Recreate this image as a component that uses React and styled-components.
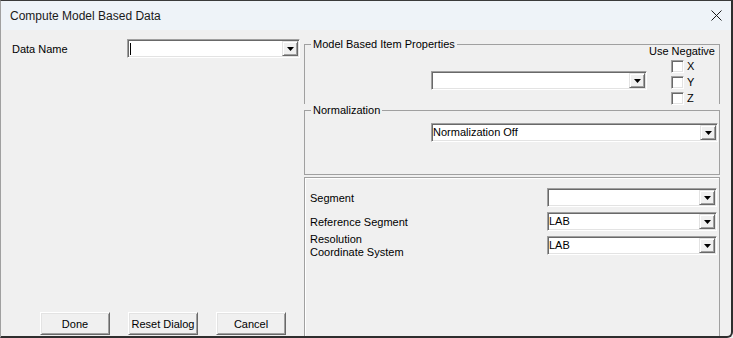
import React from 'react'
import styled, { createGlobalStyle } from 'styled-components'

const GlobalStyle = createGlobalStyle`
  html, body {
    margin: 0;
    padding: 0;
    background: #f0f0f0;
    overflow: hidden;
  }
  body {
    font-family: "Liberation Sans", Arial, sans-serif;
    font-size: 11px;
    color: #000;
  }
`

const Window = styled.div`
  width: 733px;
  height: 338px;
  box-sizing: border-box;
  display: flex;
  flex-direction: column;
  background: #f0f0f0;
  border-top: 1px solid #3a3a3a;
  border-left: 1px solid #a0a0a0;
  border-right: 2px solid #2e2e2e;
  border-bottom: 2px solid #2e2e2e;
  border-bottom-right-radius: 6px;
  overflow: hidden;
`

const TitleBar = styled.div`
  height: 29px;
  flex: none;
  display: flex;
  align-items: center;
  justify-content: space-between;
  padding: 0 9px;
  background: #eef3f8;
  font-size: 12px;
  color: #1a1a1a;
`

const CloseIcon = () => (
  <svg width="11" height="11" viewBox="0 0 11 11">
    <path d="M0.5 0.5L10.5 10.5M10.5 0.5L0.5 10.5" stroke="#1a1a1a" strokeWidth="1" fill="none" />
  </svg>
)

const Body = styled.div`
  flex: 1;
  min-height: 0;
  display: flex;
`

const LeftPane = styled.div`
  width: 303px;
  flex: none;
  box-sizing: border-box;
  display: flex;
  flex-direction: column;
  justify-content: space-between;
  padding: 9px 0 1px 0;
`

const FieldRow = styled.div`
  display: flex;
  align-items: center;
  padding-left: 11px;
`

const Label = styled.span`
  width: ${p => p.$width || 115}px;
  line-height: ${p => (p.$twoLine ? 13 : 13)}px;
  margin-top: ${p => (p.$twoLine ? 0 : 1)}px;
`

const Combo = styled.div`
  width: ${p => p.$width}px;
  height: 19px;
  flex: none;
  box-sizing: border-box;
  display: flex;
  align-items: center;
  padding: 1px;
  margin-left: ${p => p.$left || 0}px;
  margin-top: ${p => p.$top || 0}px;
  background: #fff;
  border-top: 1px solid #a0a0a0;
  border-left: 1px solid #a0a0a0;
  border-bottom: 1px solid #fff;
  border-right: 1px solid #fff;
  box-shadow: inset 1px 1px 0 #696969, inset -1px -1px 0 #e3e3e3;
`

const ComboValue = styled.span`
  flex: 1;
  line-height: 13px;
  white-space: nowrap;
`

const Caret = styled.span`
  display: block;
  width: 1px;
  height: 12px;
  margin-left: 1px;
  background: #000;
`

const DropButton = styled.div`
  width: 16px;
  height: 15px;
  flex: none;
  box-sizing: border-box;
  display: flex;
  align-items: center;
  justify-content: center;
  background: #f0f0f0;
  border-top: 1px solid #e3e3e3;
  border-left: 1px solid #e3e3e3;
  border-bottom: 1px solid #696969;
  border-right: 1px solid #696969;
  box-shadow: inset 1px 1px 0 #fff, inset -1px -1px 0 #a0a0a0;
`

const Arrow = () => (
  <svg width="7" height="4" viewBox="0 0 7 4">
    <path d="M0 0H7L3.5 4Z" fill="#000" />
  </svg>
)

const Dropdown = ({ width, left, top, value, caret }) => (
  <Combo $width={width} $left={left} $top={top}>
    <ComboValue>{caret ? <Caret /> : value}</ComboValue>
    <DropButton>
      <Arrow />
    </DropButton>
  </Combo>
)

const ButtonRow = styled.div`
  display: flex;
  gap: 18px;
  padding-left: 39px;
`

const PushButton = styled.button`
  width: 70px;
  height: 23px;
  padding: 0;
  font: inherit;
  color: #000;
  background: #f0f0f0;
  border-top: 1px solid #fff;
  border-left: 1px solid #fff;
  border-bottom: 1px solid #696969;
  border-right: 1px solid #696969;
  box-shadow: inset 1px 1px 0 #e3e3e3, inset -1px -1px 0 #a0a0a0;
`

const RightPane = styled.div`
  flex: 1;
  display: flex;
  flex-direction: column;
  padding: 8px 11px 0 0;
`

const Group = styled.fieldset`
  margin: 0;
  padding: 0;
  min-width: 0;
  height: ${p => p.$height}px;
  box-sizing: border-box;
  border: 1px solid #a0a0a0;
  border-bottom: ${p => (p.$open ? 'none' : '1px solid #a0a0a0')};
`

const Legend = styled.legend`
  margin-left: 6px;
  padding: 0 2px;
  font-size: 11px;
  line-height: 13px;
`

const GroupRow = styled.div`
  display: flex;
  align-items: flex-start;
`

const NegColumn = styled.div`
  margin-left: auto;
  margin-right: 4px;
  margin-top: -6px;
  display: flex;
  flex-direction: column;
`

const NegTitle = styled.div`
  line-height: 13px;
`

const CheckRow = styled.div`
  height: 16px;
  display: flex;
  align-items: center;
  gap: 3px;
  padding-left: 22px;
  line-height: 13px;
`

const CheckBox = styled.span`
  width: 13px;
  height: 13px;
  box-sizing: border-box;
  background: #fff;
  border-top: 1px solid #a0a0a0;
  border-left: 1px solid #a0a0a0;
  border-bottom: 1px solid #fff;
  border-right: 1px solid #fff;
  box-shadow: inset 1px 1px 0 #696969, inset -1px -1px 0 #e3e3e3;
`

const SegmentPanel = styled.div`
  flex: 1;
  margin-top: 2px;
  display: flex;
  flex-direction: column;
  gap: 5px;
  padding: 10px 2px 0 5px;
  border: 1px solid #a0a0a0;
  border-bottom: none;
  box-shadow: inset 1px 1px 0 #fff;
`

const SegmentRow = styled.div`
  height: 19px;
  display: flex;
  align-items: center;
  justify-content: space-between;
`

export default function App() {
  return (
    <>
      <GlobalStyle />
      <Window>
        <TitleBar>
          <span>Compute Model Based Data</span>
          <CloseIcon />
        </TitleBar>
        <Body>
          <LeftPane>
            <FieldRow>
              <Label>Data Name</Label>
              <Dropdown width={173} caret />
            </FieldRow>
            <ButtonRow>
              <PushButton>Done</PushButton>
              <PushButton>Reset Dialog</PushButton>
              <PushButton>Cancel</PushButton>
            </ButtonRow>
          </LeftPane>
          <RightPane>
            <Group $height={66} $open>
              <Legend>Model Based Item Properties</Legend>
              <GroupRow>
                <Dropdown width={216} left={126} top={20} />
                <NegColumn>
                  <NegTitle>Use Negative</NegTitle>
                  {['X', 'Y', 'Z'].map(axis => (
                    <CheckRow key={axis}>
                      <CheckBox />
                      <span>{axis}</span>
                    </CheckRow>
                  ))}
                </NegColumn>
              </GroupRow>
            </Group>
            <Group $height={71}>
              <Legend>Normalization</Legend>
              <Dropdown width={287} left={126} top={6} value="Normalization Off" />
            </Group>
            <SegmentPanel>
              <SegmentRow>
                <Label $width={200}>Segment</Label>
                <Dropdown width={170} />
              </SegmentRow>
              <SegmentRow>
                <Label $width={200}>Reference Segment</Label>
                <Dropdown width={170} value="LAB" />
              </SegmentRow>
              <SegmentRow>
                <Label $width={200} $twoLine>
                  Resolution
                  <br />
                  Coordinate System
                </Label>
                <Dropdown width={170} value="LAB" />
              </SegmentRow>
            </SegmentPanel>
          </RightPane>
        </Body>
      </Window>
    </>
  )
}
